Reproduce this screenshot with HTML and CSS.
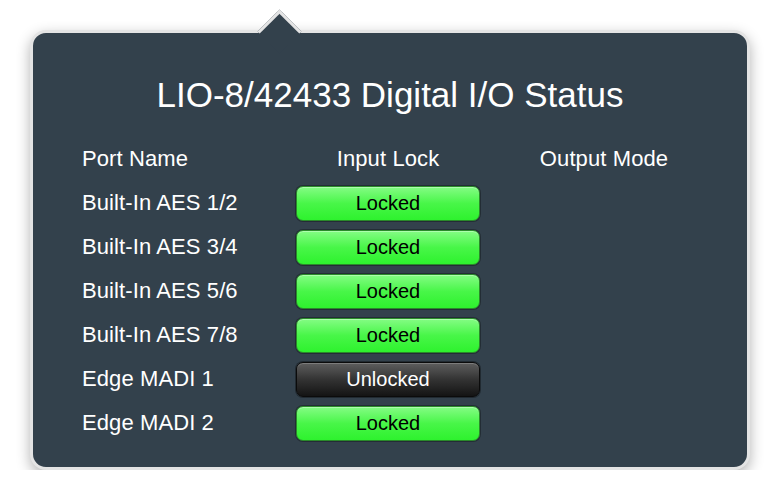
FILE: index.html
```html
<!DOCTYPE html>
<html lang="en">
<head>
  <meta charset="UTF-8">
  <title>Digital I/O Status</title>
  <link rel="stylesheet" href="styles.css">
</head>
<body>
  <div class="popover">
    <h1>LIO-8/42433 Digital I/O Status</h1>

    <div class="status-grid">
      <div class="head">Port Name</div>
      <div class="head center">Input Lock</div>
      <div class="head center">Output Mode</div>

      <div class="port">Built-In AES 1/2</div>
      <div class="lock locked">Locked</div>
      <div></div>

      <div class="port">Built-In AES 3/4</div>
      <div class="lock locked">Locked</div>
      <div></div>

      <div class="port">Built-In AES 5/6</div>
      <div class="lock locked">Locked</div>
      <div></div>

      <div class="port">Built-In AES 7/8</div>
      <div class="lock locked">Locked</div>
      <div></div>

      <div class="port">Edge MADI 1</div>
      <div class="lock unlocked">Unlocked</div>
      <div></div>

      <div class="port">Edge MADI 2</div>
      <div class="lock locked">Locked</div>
      <div></div>
    </div>
  </div>
</body>
</html>
```

FILE: styles.css
```css
body {
  margin: 0;
  background: #ffffff;
  font-family: "Liberation Sans", Arial, sans-serif;
}
.popover {
  position: relative;
  width: 720px;
  margin: 30px 0 0 30px;
  box-sizing: border-box;
  padding: 40px 0 26px 49px;
  background: #33414c;
  border: 3px solid #e4e4e4;
  border-radius: 16px;
  box-shadow: 0 5px 14px rgba(0,0,0,0.3);
  color: #ffffff;
}
/* little arrow on top */
.popover::before {
  content: "";
  position: absolute;
  left: 231px;
  top: -17px;
  width: 31px;
  height: 31px;
  box-sizing: border-box;
  background: #33414c;
  border-top: 3px solid #e4e4e4;
  border-left: 3px solid #e4e4e4;
  transform: rotate(45deg);
}
h1 {
  margin: 0 0 24px -49px;
  font-size: 35px;
  font-weight: normal;
  line-height: 44px;
  text-align: center;
}
.status-grid {
  display: grid;
  grid-template-columns: 214px 184px 248px;
  grid-auto-rows: 36px;
  row-gap: 8px;
  align-items: center;
}
.head, .port {
  font-size: 22px;
  line-height: 36px;
  letter-spacing: 0.1px;
}
.center {
  text-align: center;
}
.lock {
  height: 35px;
  box-sizing: border-box;
  border-radius: 7px;
  font-size: 20px;
  line-height: 33px;
  text-align: center;
}
.locked {
  color: #000000;
  background: linear-gradient(#84fc84, #48f648 50%, #2ef22e);
  border: 1px solid #2a8a2a;
  box-shadow: inset 0 1px 0 rgba(255,255,255,0.35), 0 0 0 1px rgba(0,0,0,0.3);
}
.unlocked {
  color: #ffffff;
  background: linear-gradient(#5e5e5e, #333333 50%, #141414);
  border: 1px solid #0b0b0b;
  box-shadow: inset 0 1px 0 rgba(255,255,255,0.2), 0 0 0 1px rgba(0,0,0,0.35);
}
```
